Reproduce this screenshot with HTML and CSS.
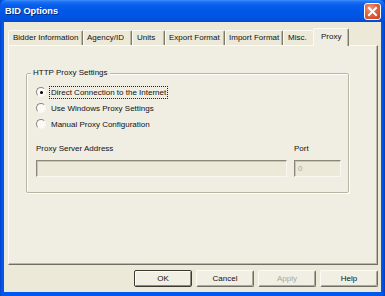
FILE: index.html
```html
<!DOCTYPE html>
<html>
<head>
<meta charset="utf-8">
<title>BID Options</title>
<link rel="stylesheet" href="styles.css">
</head>
<body>
<div class="window">
  <div class="titlebar">
    <span class="title">BID Options</span>
    <span class="close">
      <svg width="15" height="15" viewBox="0 0 15 15"><path d="M4 4 L11 11 M11 4 L4 11" stroke="#fff" stroke-width="2" stroke-linecap="square"/></svg>
    </span>
  </div>
  <div class="client">
    <div class="tabs">
      <div class="tab t1">Bidder Information</div>
      <div class="tab t2">Agency/ID</div>
      <div class="tab t3">Units</div>
      <div class="tab t4">Export Format</div>
      <div class="tab t5">Import Format</div>
      <div class="tab t6">Misc.</div>
      <div class="tab active">Proxy</div>
    </div>
    <div class="panel">
      <fieldset class="group">
        <legend>HTTP Proxy Settings</legend>
        <div class="group-body">
          <div class="radios">
            <div class="radio"><span class="dot checked"></span><span class="rlabel focus">Direct Connection to the Internet</span></div>
            <div class="radio"><span class="dot"></span><span class="rlabel">Use Windows Proxy Settings</span></div>
            <div class="radio"><span class="dot"></span><span class="rlabel">Manual Proxy Configuration</span></div>
          </div>
          <div class="fields">
            <span class="flabel">Proxy Server Address</span>
            <span class="flabel">Port</span>
            <div class="input"></div>
            <div class="input port">0</div>
          </div>
        </div>
      </fieldset>
    </div>
    <div class="buttons">
      <div class="btn default">OK</div>
      <div class="btn">Cancel</div>
      <div class="btn disabled">Apply</div>
      <div class="btn">Help</div>
    </div>
  </div>
</div>
</body>
</html>
```
FILE: styles.css
```css
html, body {
  margin: 0;
  padding: 0;
  background: #0055e5;
}
.window {
  width: 385px;
  height: 296px;
  display: flex;
  flex-direction: column;
  background: linear-gradient(to right, #0842c8 0, #0058ee 2px, #0058ee 382px, #0840c0 385px);
  font-family: "Liberation Sans", Arial, sans-serif;
  font-size: 8px;
  color: #111;
  box-sizing: border-box;
}
.titlebar {
  height: 22px;
  flex: none;
  display: flex;
  align-items: center;
  justify-content: space-between;
  padding: 0 4px 0 5px;
  background: linear-gradient(to bottom, #3b8ff9 0, #1b6ff4 2px, #0a60ec 5px, #0058e8 10px, #0055e3 16px, #0050dc 20px, #0a48c8 22px);
  border-radius: 6px 6px 0 0;
}
.title {
  color: #fff;
  font-weight: bold;
  font-size: 9.2px;
  text-shadow: 1px 1px 0 #0a2a80;
}
.close {
  width: 15px;
  height: 15px;
  border: 1px solid #fff;
  border-radius: 3px;
  background: radial-gradient(circle at 35% 30%, #f29a7c 0, #e0633d 45%, #c8401a 100%);
  display: flex;
  margin-top: 1px;
}
.client {
  flex: 1;
  margin: 0 4px 4px 4px;
  background: #ece9d8;
  display: flex;
  flex-direction: column;
  padding: 6px 3px 0 4px;
}
.tabs {
  height: 17px;
  display: flex;
  align-items: flex-end;
  flex: none;
}
.tab {
  box-sizing: border-box;
  height: 15px;
  line-height: 14px;
  padding-left: 4px;
  white-space: nowrap;
  border-top: 1px solid #fbfaf5;
  border-left: 1px solid #fbfaf5;
  border-right: 1px solid #7d7a6c;
  box-shadow: inset -1px 0 0 #bcb8a8;
  border-radius: 2px 2px 0 0;
  background: #ece9d8;
}
.t1 { width: 75px; padding-left: 4px; }
.t2 { width: 49px; padding-left: 3px; }
.t3 { width: 33px; }
.t4 { width: 60px; padding-left: 3px; }
.t5 { width: 58px; padding-left: 3px; }
.t6 { width: 30px; border-right: none; box-shadow: none; }
.tab.active {
  width: 36px;
  height: 18px;
  line-height: 15px;
  padding-left: 7px;
  margin-bottom: -1px;
  background: #f0eee2;
  position: relative;
  z-index: 1;
}
.panel {
  box-sizing: border-box;
  height: 220px;
  flex: none;
  background: #f0eee2;
  border-top: 1px solid #fbfaf5;
  border-left: 1px solid #fbfaf5;
  border-right: 1px solid #716f64;
  border-bottom: 1px solid #716f64;
  box-shadow: inset -1px -1px 0 #bcb8a8;
  padding: 22px 0 0 17px;
}
.group {
  box-sizing: border-box;
  width: 323px;
  margin: 0;
  padding: 6px 0 15px 0;
  border: 1px solid #b9b5a3;
  box-shadow: inset 1px 1px 0 #fff, 1px 1px 0 #fff;
  border-radius: 2px;
}
.group legend {
  padding: 0 2px;
  margin-left: 4px;
  line-height: 10px;
  background: #f0eee2;
}
.group-body {
  padding-left: 9px;
  display: flex;
  flex-direction: column;
}
.radios {
  display: flex;
  flex-direction: column;
}
.radio {
  height: 16px;
  display: flex;
  align-items: center;
  gap: 3px;
}
.dot {
  box-sizing: border-box;
  width: 10px;
  height: 10px;
  border-radius: 50%;
  border: 1px solid;
  border-color: #8a877a #f8f7f2 #f8f7f2 #8a877a;
  background: #fbfaf6;
  display: flex;
  align-items: center;
  justify-content: center;
}
.dot.checked::after {
  content: "";
  width: 3px;
  height: 3px;
  border-radius: 50%;
  background: #000;
}
.rlabel {
  border: 1px dotted transparent;
  padding: 0 1px;
  line-height: 11px;
  white-space: nowrap;
}
.rlabel.focus {
  border-color: #222;
}
.fields {
  margin-top: 11px;
  display: grid;
  grid-template-columns: 251px 47px;
  grid-template-rows: 12px 17px;
  column-gap: 7px;
  row-gap: 5px;
}
.flabel {
  line-height: 12px;
  white-space: nowrap;
}
.input {
  box-sizing: border-box;
  height: 17px;
  border: 1px solid;
  border-color: #8a877a #f8f7f2 #f8f7f2 #8a877a;
  box-shadow: inset 1px 1px 0 #c9c6b6;
  background: #ece9d8;
  color: #aca899;
  line-height: 15px;
  padding-left: 3px;
}
.buttons {
  margin-top: 5px;
  display: flex;
  justify-content: flex-end;
  gap: 4px;
}
.btn {
  box-sizing: border-box;
  width: 58px;
  height: 17px;
  line-height: 15px;
  text-align: center;
  border: 1px solid;
  border-color: #fbfaf5 #716f64 #716f64 #fbfaf5;
  box-shadow: inset -1px -1px 0 #aca899;
  background: #f1efe4;
  border-radius: 2px;
}
.btn.default {
  border-color: #3a3a32;
  box-shadow: inset 1px 1px 0 #fbfaf5, inset -1px -1px 0 #8e8b7d;
}
.btn.disabled {
  color: #aca899;
}
```
